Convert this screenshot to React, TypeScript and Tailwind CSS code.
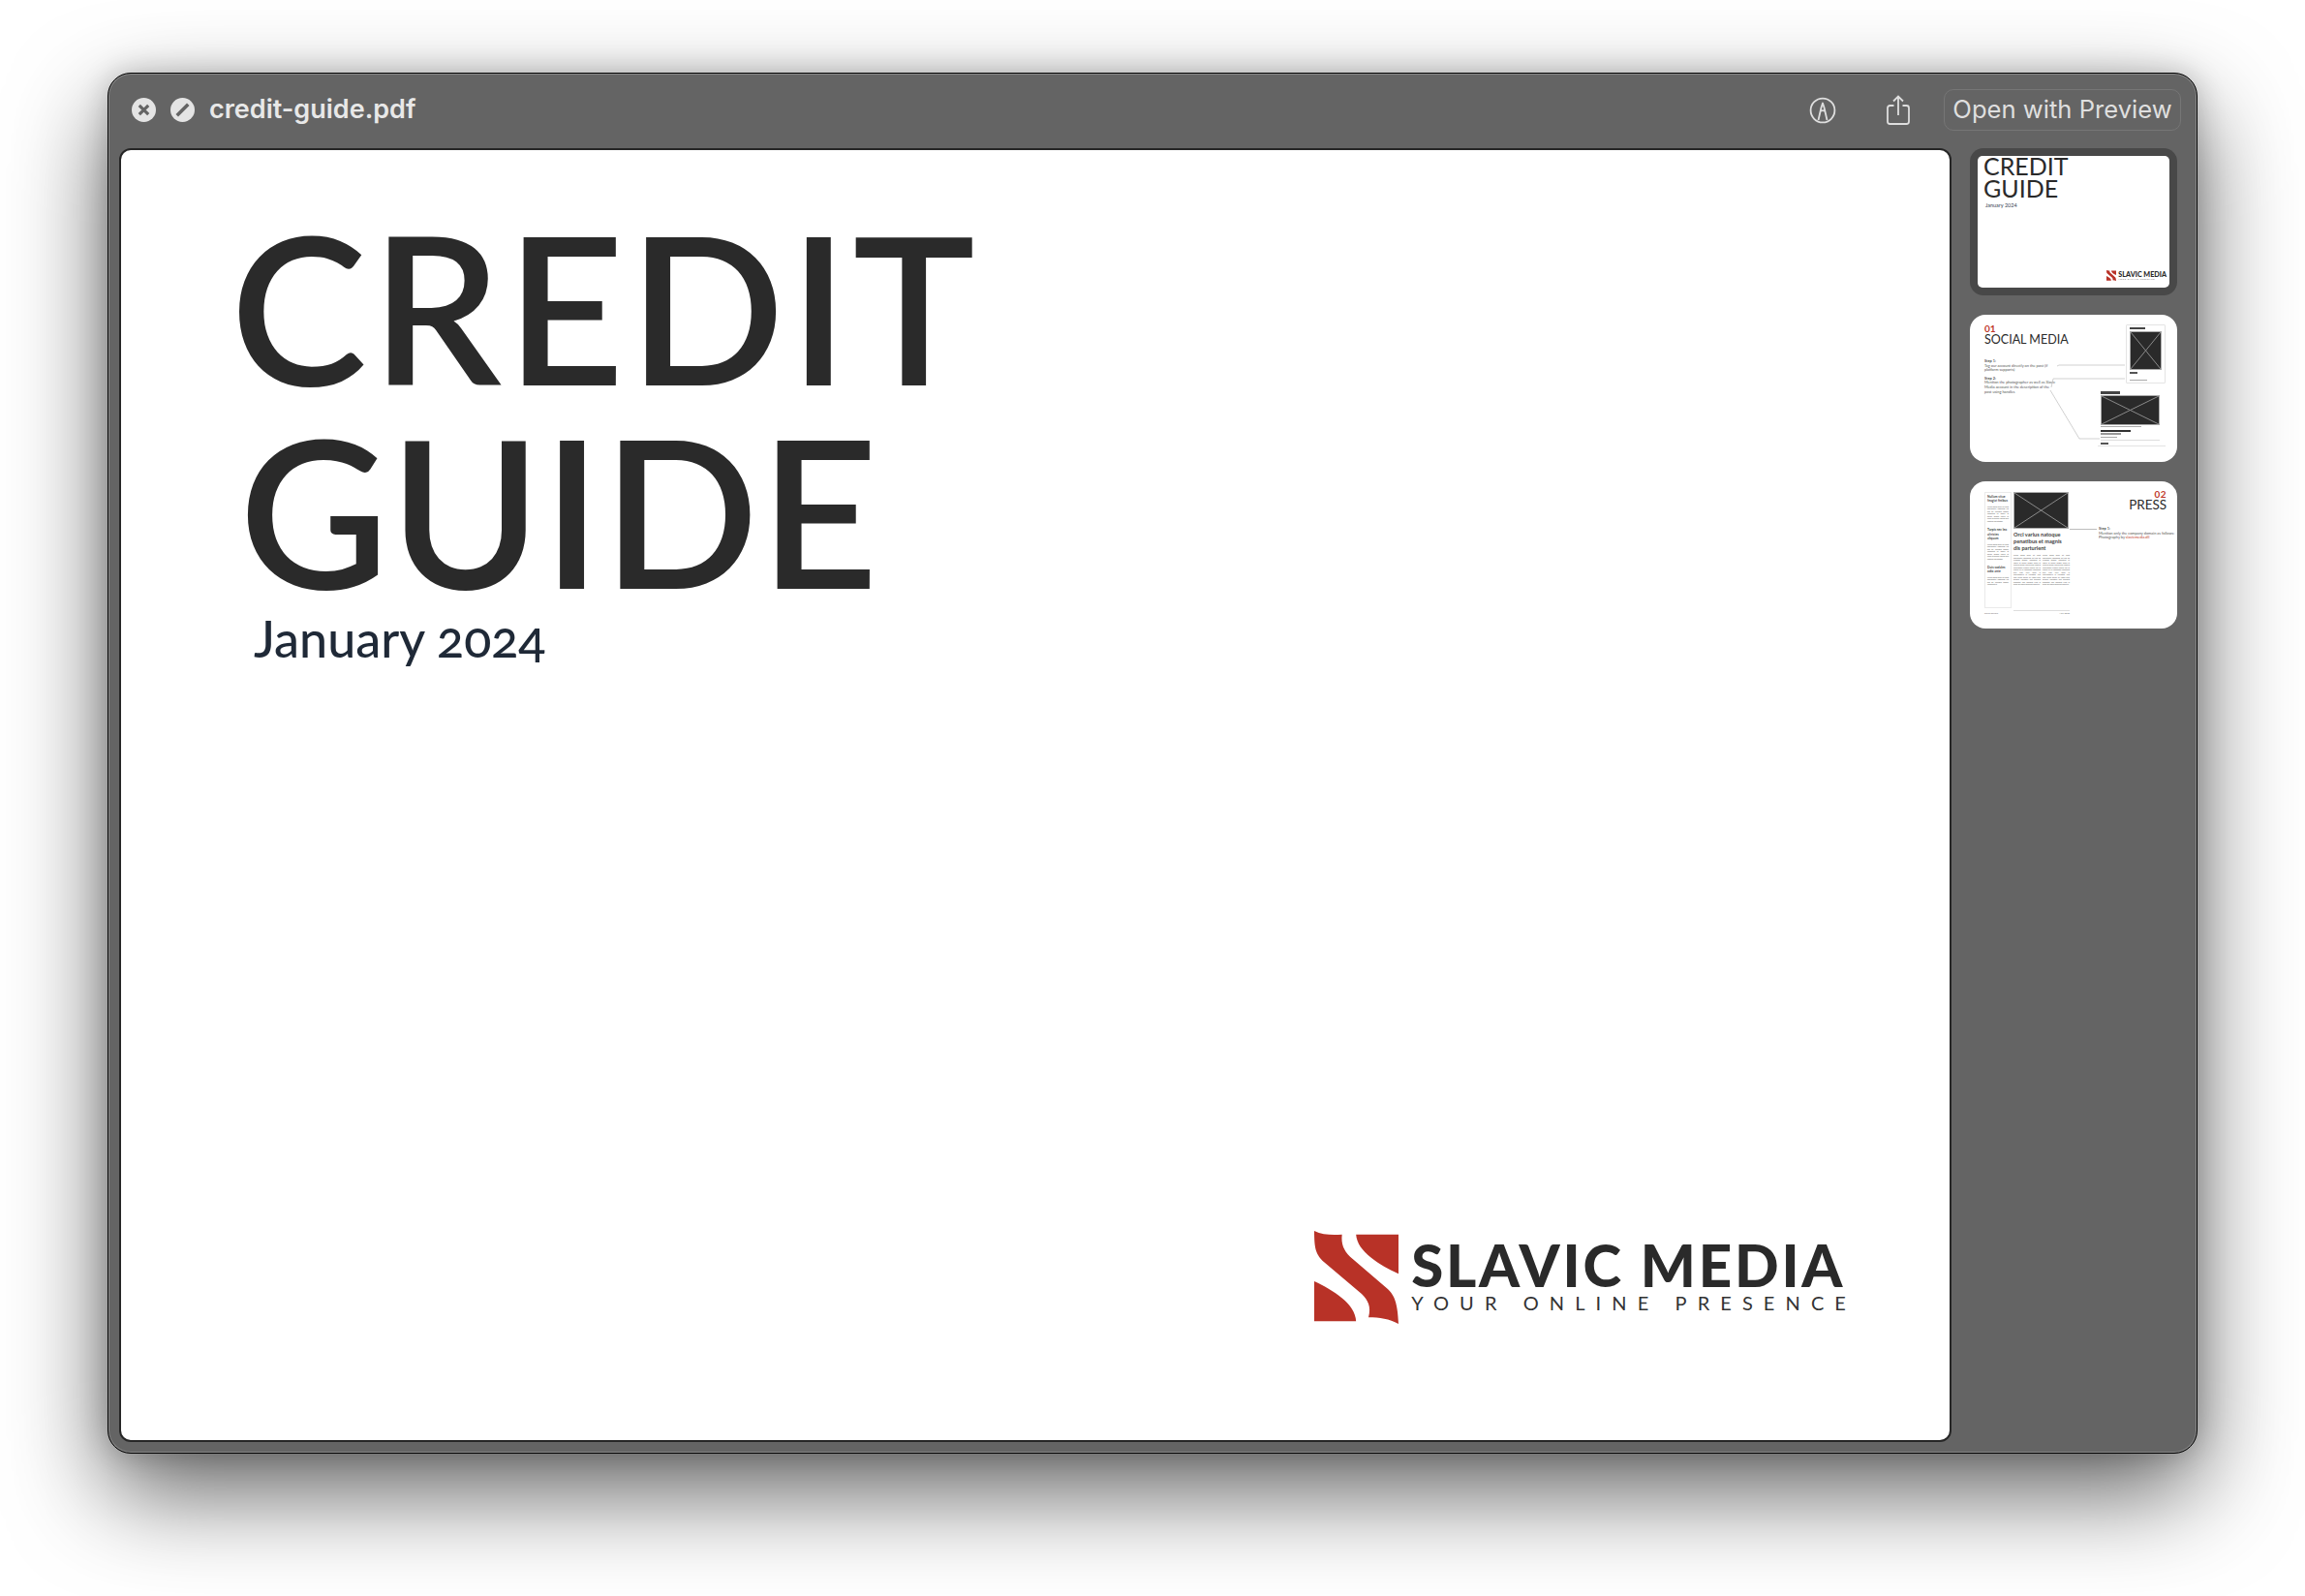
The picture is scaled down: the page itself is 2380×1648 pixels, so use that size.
const LOREM =
  'Lorem ipsum dolor sit amet consectetur adipiscing elit sed do eiusmod tempor incididunt ut labore et dolore magna aliqua ut enim ad minim veniam quis nostrud exercitation ullamco laboris nisi ut aliquip ex ea commodo consequat duis aute irure dolor in reprehenderit in voluptate velit esse cillum dolore eu fugiat nulla pariatur excepteur sint occaecat cupidatat non proident sunt in culpa qui officia deserunt mollit anim id est laborum';

function LogoMark({ className }: { className: string }) {
  return (
    <svg viewBox="40 30 258 288" preserveAspectRatio="none" className={className} fill="#b83227">
      <path d="M40 30C65 42 95 44 125 41C122 70 130 90 150 110L265 210C285 230 295 250 298 318C270 303 240 298 206 298C215 265 205 245 185 225L65 122C45 100 40 85 40 30Z" />
      <path d="M168 41L298 41L298 163C240 135 172 95 168 41Z" />
      <path d="M40 186C100 215 165 255 168 310L40 310Z" />
    </svg>
  );
}

function Placeholder({ className }: { className: string }) {
  return (
    <div className={`relative bg-[#2a2a2a] border-[0.5px] border-[#aaa] ${className}`}>
      <svg viewBox="0 0 100 100" preserveAspectRatio="none" className="absolute inset-0 w-full h-full">
        <path d="M0 0L100 100M100 0L0 100" stroke="#8a8a8a" strokeWidth="1" vectorEffect="non-scaling-stroke" fill="none" />
      </svg>
    </div>
  );
}

function CoverThumb() {
  return (
    <div className="w-[214px] h-[152px] rounded-[14px] bg-[#484848] p-2 shrink-0">
      <div className="w-full h-full bg-white rounded-[5px] flex flex-col pl-[6px] pr-[3px] pb-[7px]">
        <div className="text-[25px] leading-[23px] text-[#2a2a2a] -mt-[1px] font-['Lato',sans-serif]">
          <div>CREDIT</div>
          <div>GUIDE</div>
        </div>
        <div className="text-[5.5px] leading-[8px] text-[#374151] pl-[2px] mt-[2px] font-['Lato',sans-serif]">January 2024</div>
        <div className="mt-auto ml-auto flex items-center gap-[2px]">
          <LogoMark className="w-[10px] h-[11px]" />
          <div className="font-['Lato',sans-serif]">
            <div className="text-[7.2px] leading-[7px] font-black text-[#2a2a2a] whitespace-nowrap">SLAVIC MEDIA</div>
            <div className="text-[2px] leading-[3px] tracking-[0.7px] text-[#444] whitespace-nowrap">YOUR ONLINE PRESENCE</div>
          </div>
        </div>
      </div>
    </div>
  );
}

function SocialThumb() {
  return (
    <div className="relative w-[214px] h-[152px] rounded-[16px] bg-white flex shrink-0 overflow-hidden font-['Lato',sans-serif]">
      <div className="w-[88px] pl-[15px] pt-[10px] shrink-0">
        <div className="text-[10px] leading-[8px] font-bold text-[#c0392b]">01</div>
        <div className="text-[12.5px] leading-[14px] mt-[1px] text-[#2a2a2a] whitespace-nowrap">SOCIAL MEDIA</div>
        <div className="text-[3.9px] leading-[4.6px] text-[#555] mt-[13px] w-[74px]">
          <div className="font-bold">Step 1:</div>
          <div>Tag our account directly on the post (if platform supports)</div>
          <div className="font-bold mt-[4px]">Step 2:</div>
          <div>Mention the photographer as well as Slavic Media account in the description of the post using handles</div>
        </div>
      </div>
      <div className="flex-1 flex flex-col items-end pr-[12px] pt-[10px]">
        <div className="w-[41px] h-[61px] border border-[#e4e4e4] rounded-[1px] px-[3px] pt-[2px]">
          <div className="w-[16px] h-[2px] bg-[#444] mb-[2px]" />
          <Placeholder className="w-full h-[40px]" />
          <div className="w-[8px] h-[2px] bg-[#555] mt-[2px]" />
          <div className="w-[18px] h-[1px] bg-[#aaa] mt-[6px]" />
        </div>
        <div className="w-[70px] h-[60px] mt-[5px] px-[3px] pt-[3px] border-b border-[#e4e4e4]">
          <div className="w-[20px] h-[3px] bg-[#444] mb-[1px]" />
          <Placeholder className="w-[61px] h-[31px]" />
          <div className="w-[42px] h-[1px] bg-[#aaa] mt-[1px]" />
          <div className="w-[31px] h-[2px] bg-[#333] mt-[3px]" />
          <div className="w-[21px] h-[2px] bg-[#999] mt-[1px]" />
          <div className="w-[17px] h-[1px] bg-[#aaa] mt-[2px]" />
          <div className="w-[61px] h-[1px] bg-[#ddd] mt-[2px]" />
          <div className="w-[8px] h-[2px] bg-[#555] mt-[2px]" />
        </div>
      </div>
      {/* connector lines between the steps and the examples */}
      <svg viewBox="0 0 214 152" className="absolute inset-0 w-full h-full pointer-events-none">
        <path d="M90 53L92 52L160 52M84 75L86 66L160 66M83 78L113 128L134 128" stroke="#bdbdbd" strokeWidth="0.7" fill="none" />
      </svg>
    </div>
  );
}

function Column({ title, chars }: { title: string; chars: number }) {
  return (
    <div className="mb-[6px]">
      <div className="text-[3.3px] leading-[4.4px] font-bold text-[#444] mb-[2px]">{title}</div>
      <Greek chars={chars} />
    </div>
  );
}

function Greek({ chars }: { chars: number }) {
  return <p className="text-[1.8px] leading-[2.5px] text-[#555] text-justify">{LOREM.slice(0, chars)}</p>;
}

function PressThumb() {
  return (
    <div className="relative w-[214px] h-[152px] rounded-[16px] bg-white flex shrink-0 overflow-hidden pl-[15px] pt-[11px] font-['Lato',sans-serif]">
      <div className="w-[88px] shrink-0">
        <div className="flex gap-[2px]">
          <div className="w-[28px] h-[120px] border border-[#eaeaea] px-[2px] pt-[2px] shrink-0 overflow-hidden">
            <Column title="Nullam vitae feugiat finibus" chars={170} />
            <Column title="Turpis nec leo ultricies aliquam" chars={170} />
            <Column title="Duis sodales odio ante" chars={90} />
          </div>
          <div className="w-[58px]">
            <Placeholder className="w-[57px] h-[38px]" />
            <div className="text-[5.6px] leading-[7px] font-bold text-[#444] mt-[2px]">Orci varius natoque penatibus et magnis dis parturient</div>
            <div className="flex gap-[2px] mt-[3px]">
              <div className="flex-1"><Greek chars={420} /></div>
              <div className="flex-1"><Greek chars={420} /></div>
            </div>
          </div>
        </div>
        <div className="h-[1px] bg-[#ddd] ml-[30px] mt-[2px]" />
        <div className="flex justify-between text-[2.4px] leading-[4px] text-[#666] mt-[1px]">
          <span>Slavic Review</span>
          <span>Nov 2023</span>
        </div>
      </div>
      <div className="flex-1 flex flex-col pr-[11px] pl-[30px] -mt-[2px]">
        <div className="text-right text-[10px] leading-[8px] font-bold text-[#c0392b] tracking-[0.5px] pr-[8px]">02</div>
        <div className="text-right text-[13.5px] leading-[14px] text-[#2a2a2a] pr-[8px]">PRESS</div>
        <div className="text-[3.9px] leading-[4.6px] text-[#555] mt-[16px] whitespace-nowrap">
          <div className="font-bold">Step 1:</div>
          <div>Mention only the company domain as follows:</div>
          <div>Photography by <span className="text-[#c0392b]">slavicmedia.dll</span></div>
        </div>
      </div>
      <div className="absolute left-[103px] top-[49px] w-[28px] h-[1px] bg-[#bdbdbd]" />
    </div>
  );
}

export default function App() {
  return (
    <div className="w-[2380px] h-[1648px] bg-white pt-[75px] pl-[111px] overflow-hidden font-['Inter',sans-serif]">
      <div className="w-[2158px] h-[1426px] rounded-[24px] bg-[#646464] border border-black flex flex-col shadow-[inset_0_0_0_1px_#888,0_40px_100px_rgba(0,0,0,0.62),0_0_30px_rgba(0,0,0,0.2)]">
        <header className="h-[75px] shrink-0 flex items-center pl-[24px] pr-[15px] mb-[2px]">
          <svg viewBox="0 0 24 24" className="w-[25px] h-[25px]">
            <circle cx="12" cy="12" r="12" fill="#e4e4e4" />
            <path d="M7.5 7.5L16.5 16.5M16.5 7.5L7.5 16.5" stroke="#646464" strokeWidth="3" />
          </svg>
          <svg viewBox="0 0 24 24" className="w-[25px] h-[25px] ml-[15px]">
            <circle cx="12" cy="12" r="12" fill="#e4e4e4" />
            <path d="M6.5 17.5L17.5 6.5" stroke="#646464" strokeWidth="3.4" />
          </svg>
          <span className="ml-[15px] text-[27px] font-semibold text-[#e8e8e8]">credit-guide.pdf</span>
          <svg viewBox="0 0 28 28" className="w-[28px] h-[28px] ml-auto" fill="none" stroke="#dedede" strokeWidth="1.8">
            <circle cx="14" cy="14" r="12.4" />
            <path d="M9.5 24L12.5 11L14 6.5L15.5 11L18.5 24M11.5 15C13 14 15 14 16.5 15" strokeLinejoin="round" />
          </svg>
          <svg viewBox="0 0 24 32" className="w-[24px] h-[32px] ml-[52px]" fill="none" stroke="#dedede" strokeWidth="1.8">
            <path d="M7.5 11H3.5C2 11 1 12 1 13.5V27.5C1 29 2 30 3.5 30H20.5C22 30 23 29 23 27.5V13.5C23 12 22 11 20.5 11H16.5" />
            <path d="M12 21V2M7 6.5L12 1.5L17 6.5" />
          </svg>
          <button className="ml-[35px] mr-[1px] w-[245px] h-[43px] pb-[2px] rounded-[10px] border border-[#767676] text-[25.6px] leading-none text-[#dfdfdf] flex items-center justify-center whitespace-nowrap">
            Open with Preview
          </button>
        </header>
        <main className="flex-1 min-h-0 flex pl-[11px] pb-[11px]">
          <section className="w-[1892px] h-[1336px] shrink-0 bg-white rounded-[12px] border-2 border-[#262626] flex flex-col pl-[113px] pr-[96px] pb-[120px] font-['Lato',sans-serif]">
            <h1 className="text-[212px] leading-[210px] text-[#2a2a2a] font-semibold pt-[56px]">
              <div className="tracking-[4.5px]">CREDIT</div>
              <div className="tracking-[1px] pl-[9px]">GUIDE</div>
            </h1>
            <div className="text-[52px] leading-[60px] text-[#1f2937] font-medium pl-[24px] -mt-[2px] oldstyle-nums">January 2024</div>
            <div className="mt-auto self-end flex items-center gap-[13px]">
              <LogoMark className="w-[87px] h-[96px]" />
              <div>
                <div className="text-[60px] leading-[52px] font-black text-[#2a2a2a] tracking-[2.8px] whitespace-nowrap">SLAVIC MEDIA</div>
                <div className="text-[20px] leading-[26px] tracking-[11.1px] text-[#333] whitespace-nowrap">YOUR ONLINE PRESENCE</div>
              </div>
            </div>
          </section>
          <aside className="ml-[19px] flex flex-col gap-[20px]">
            <CoverThumb />
            <SocialThumb />
            <PressThumb />
          </aside>
        </main>
      </div>
    </div>
  );
}
